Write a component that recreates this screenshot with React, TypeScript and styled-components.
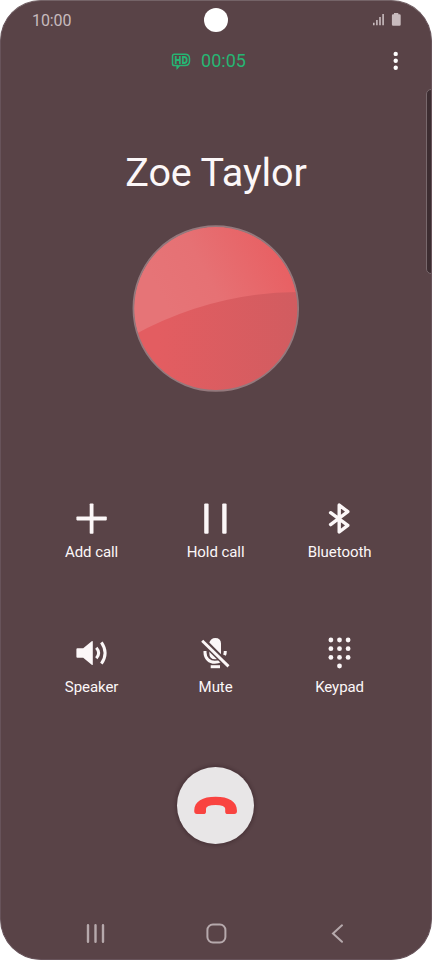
import React from "react";
import styled, { createGlobalStyle } from "styled-components";

const GlobalStyle = createGlobalStyle`
  * { box-sizing: border-box; }
  body { margin: 0; background: #fff; font-family: Roboto, "Liberation Sans", sans-serif; }
  button { font: inherit; color: inherit; border: 0; padding: 0; background: none; }
  svg { display: block; }
`;

const Phone = styled.main`
  position: relative;
  display: flex;
  flex-direction: column;
  width: 432px;
  height: 960px;
  overflow: hidden;
  border: 1px solid #67535a;
  border-top-color: #746367;
  border-radius: 41px;
  background: #594347;
  color: #fcf7f8;
`;

const StatusBar = styled.header`
  display: grid;
  grid-template-columns: 1fr 24px 1fr;
  align-items: center;
  height: 38px;
  padding: 0 30px 0 31px;
`;

const Clock = styled.time`
  padding-top: 2px;
  font-size: 16px;
  line-height: 20px;
  letter-spacing: -0.1px;
  color: #c8bbbe;
`;

const Camera = styled.div`
  width: 24px;
  height: 24px;
  margin-left: -0.5px;
  border-radius: 50%;
  background: #fff;
`;

const StatusIcons = styled.div`
  display: flex;
  justify-content: flex-end;
  color: #c8bbbe;
`;

const CallBar = styled.div`
  display: grid;
  grid-template-columns: 1fr auto 1fr;
  align-items: center;
  height: 43px;
  padding: 0 26px;
`;

const Duration = styled.div`
  grid-column: 2;
  display: flex;
  align-items: center;
  gap: 10px;
  margin-right: 15px;
  font-size: 18px;
  line-height: 22px;
  color: #27b573;
`;

const MenuButton = styled.button`
  justify-self: end;
`;

const CallerName = styled.h1`
  margin: 67px 0 0;
  font-size: 39.5px;
  font-weight: 400;
  line-height: 48px;
  letter-spacing: -0.1px;
  text-align: center;
`;

const Avatar = styled.div`
  align-self: center;
  margin-top: 28px;
`;

const Controls = styled.section`
  display: grid;
  grid-template-columns: repeat(3, 124px);
  row-gap: 75px;
  margin: 109px 0 0 28.6px;
`;

const Control = styled.button`
  display: flex;
  flex-direction: column;
  align-items: center;
  gap: 8px;
  height: 60px;
  font-size: 15px;
  line-height: 20px;
  letter-spacing: -0.06px;
`;

const EndCall = styled.button`
  display: grid;
  place-items: center;
  align-self: center;
  width: 77px;
  height: 77px;
  margin: 70px 0.4px 0 0;
  border-radius: 50%;
  background: #e8e6e7;
  box-shadow: 0 0 3px 2px rgba(45, 28, 32, 0.3);
`;

const NavBar = styled.nav`
  display: flex;
  justify-content: space-between;
  margin-top: 77px;
  padding: 0 82px;
  color: #b6a9ac;
`;

const EdgePanel = styled.aside`
  position: absolute;
  top: 88px;
  right: -5px;
  width: 10px;
  height: 185px;
  border: 1px solid #78686c;
  border-radius: 5px;
  background: #3d2d31;
`;

const PlusIcon = () => (
  <svg width="32" height="32" viewBox="0.4 -0.4 32 32" fill="currentColor">
    <rect x="14.1" y="1" width="3.8" height="30.4" rx=".8" />
    <rect x=".8" y="14.2" width="30.4" height="3.8" rx=".8" />
  </svg>
);

const HoldIcon = () => (
  <svg width="32" height="32" viewBox="0.4 -0.4 32 32" fill="currentColor">
    <rect x="4.6" y="1" width="4.4" height="30.4" rx="1.1" />
    <rect x="22.6" y="1" width="4.4" height="30.4" rx="1.1" />
  </svg>
);

const BluetoothIcon = () => (
  <svg width="32" height="32" viewBox="0.8 -0.3 32 32" fill="none" stroke="currentColor" strokeWidth="3.4" strokeLinejoin="round" strokeLinecap="round">
    <path d="M7.4 10.4 24.6 23.1 16 29.7V2.7L24.6 9.4 7.4 22.3" />
  </svg>
);

const SpeakerIcon = () => (
  <svg width="32" height="32" viewBox="0.4 0 32 32">
    <path d="M1.8 11.2H7.6L16.1 4.2Q17.2 3.5 17.2 4.8V27.2Q17.2 28.5 16.1 27.8L7.6 20.8H1.8Q.8 20.8.8 19.8V12.2Q.8 11.2 1.8 11.2Z" fill="currentColor" />
    <path d="M20.7 10.7Q25.4 16 20.7 21.3M25.8 5.3Q33.2 16 25.8 26.7" fill="none" stroke="currentColor" strokeWidth="3" />
  </svg>
);

const MuteIcon = () => (
  <svg width="32" height="32" viewBox="1 0 32 32">
    <path d="M10.3 5.6Q11.8.9 16.2.9Q22 .9 22 6.6V17.2ZM10.3 11.2 20.6 21Q19 22.2 16.2 22.2Q10.3 22.2 10.3 16.2Z" fill="currentColor" />
    <path d="M6 14V15.5C6 21.3 10.5 25.3 15.8 25.3Q19.2 25.3 21.7 23.8M26.3 14Q26.3 16.4 25.5 18.2" fill="none" stroke="currentColor" strokeWidth="3" />
    <path d="M3.2 3.8 29.5 29.4" fill="none" stroke="#594347" strokeWidth="5.8" />
    <path d="M3.2 3.8 29.5 29.4" fill="none" stroke="currentColor" strokeWidth="2.9" />
    <path d="M11.7 28.2H21V31.2H11.7Z" fill="currentColor" />
  </svg>
);

const keypadDots = [
  ...[3, 11.7, 20.4].flatMap((y) => [7.4, 16, 24.6].map((x) => [x, y])),
  [16, 29],
];

const KeypadIcon = () => (
  <svg width="32" height="32" viewBox="0.5 0 32 32" fill="currentColor">
    {keypadDots.map(([x, y]) => (
      <circle key={`${x}-${y}`} cx={x} cy={y} r="2.4" />
    ))}
  </svg>
);

const HdIcon = () => (
  <svg width="20" height="18" viewBox="0 0 20 18" fill="none" stroke="currentColor">
    <path d="M3.4 2.2H14Q18.5 2.2 18.5 6.7V9.1Q18.5 13.6 14 13.6H8.5L6.3 16V13.6H3.4Q1.5 13.6 1.5 11.7V4.1Q1.5 2.2 3.4 2.2Z" strokeWidth="1.5" />
    <path d="M4.7 4.1V11.9M8.8 4.1V11.9M4.7 8H8.8M11.8 5V11H13.2Q15.7 11 15.7 8Q15.7 5 13.2 5Z" strokeWidth="1.8" />
    <path d="M5.5 13.2H8.9L5.9 17.2Z" fill="currentColor" stroke="none" />
  </svg>
);

const controls = [
  { label: "Add call", Icon: PlusIcon },
  { label: "Hold call", Icon: HoldIcon },
  { label: "Bluetooth", Icon: BluetoothIcon },
  { label: "Speaker", Icon: SpeakerIcon },
  { label: "Mute", Icon: MuteIcon },
  { label: "Keypad", Icon: KeypadIcon },
];

export default function App() {
  return (
    <>
      <GlobalStyle />
      <Phone>
        <StatusBar>
          <Clock>10:00</Clock>
          <Camera />
          <StatusIcons>
            <svg width="30" height="16" viewBox="371.2 12 30 16" fill="currentColor">
              <path d="M373.2 22.7h1.6v2.6h-1.6zM376.3 20.1h1.6v5.2h-1.6zM379.4 17h1.6v8.3h-1.6zM382.5 14h1.6v11.3h-1.6z" />
              <path d="M394.2 13h4.3v1.3h1.2q1.2 0 1.2 1.2v9q0 1.2-1.2 1.2h-6.4q-1.2 0-1.2-1.2v-9q0-1.2 1.2-1.2h.9z" />
            </svg>
          </StatusIcons>
        </StatusBar>
        <CallBar>
          <Duration>
            <HdIcon />
            <span>00:05</span>
          </Duration>
          <MenuButton aria-label="More options">
            <svg width="18" height="24" viewBox="0 0 18 24" fill="#fff">
              <circle cx="8.7" cy="4.9" r="2.2" />
              <circle cx="8.7" cy="11.8" r="2.2" />
              <circle cx="8.7" cy="18.7" r="2.2" />
            </svg>
          </MenuButton>
        </CallBar>
        <CallerName>Zoe Taylor</CallerName>
        <Avatar>
          <svg width="168" height="168" viewBox="132 225 168 168">
            <defs>
              <linearGradient id="sheen" x1="0.15" y1="0.65" x2="0.9" y2="0.25">
                <stop offset=".15" stopColor="#e67477" />
                <stop offset=".5" stopColor="#e67174" />
                <stop offset="1" stopColor="#e86164" />
              </linearGradient>
              <linearGradient id="shade">
                <stop offset=".15" stopColor="#e35d61" />
                <stop offset="1" stopColor="#d15c60" />
              </linearGradient>
              <clipPath id="disc">
                <circle cx="215.8" cy="308.5" r="82" />
              </clipPath>
            </defs>
            <g clipPath="url(#disc)">
              <rect x="132" y="225" width="168" height="168" fill="url(#sheen)" />
              <path d="M132 336Q212 292 300 292V393H132Z" fill="url(#shade)" />
            </g>
            <circle cx="215.8" cy="308.5" r="82.4" fill="none" stroke="#94797d" strokeWidth="1.7" />
          </svg>
        </Avatar>
        <Controls>
          {controls.map(({ label, Icon }) => (
            <Control key={label}>
              <Icon />
              <span>{label}</span>
            </Control>
          ))}
        </Controls>
        <EndCall aria-label="End call">
          <svg width="44" height="20" viewBox="0.4 0.4 44 20" fill="#f94340">
            <path d="M.6 15.5C.6 5.5 9 1.2 22 1.2S43.4 5.5 43.4 15.5Q43.4 18.4 40.6 18.4H34.2Q31.6 18.4 31.6 15.8V13.2Q31.6 9.3 22 9.3T12.4 13.2V15.8Q12.4 18.4 9.8 18.4H3.4Q.6 18.4.6 15.5Z" />
          </svg>
        </EndCall>
        <NavBar>
          <svg width="24" height="24" viewBox="83 921 24 24" fill="none" stroke="currentColor" strokeWidth="2.4" strokeLinecap="round">
            <path d="M88 925.2V941.8M95.5 925.2V941.8M103 925.2V941.8" />
          </svg>
          <svg width="24" height="24" viewBox="204 921 24 24" fill="none" stroke="currentColor" strokeWidth="2">
            <rect x="207.4" y="924.5" width="18" height="18" rx="5.5" />
          </svg>
          <svg width="24" height="24" viewBox="325 921 24 24" fill="none" stroke="currentColor" strokeWidth="2" strokeLinecap="round">
            <path d="M342 925.3 333 933.5 342 941.8" />
          </svg>
        </NavBar>
        <EdgePanel />
      </Phone>
    </>
  );
}
